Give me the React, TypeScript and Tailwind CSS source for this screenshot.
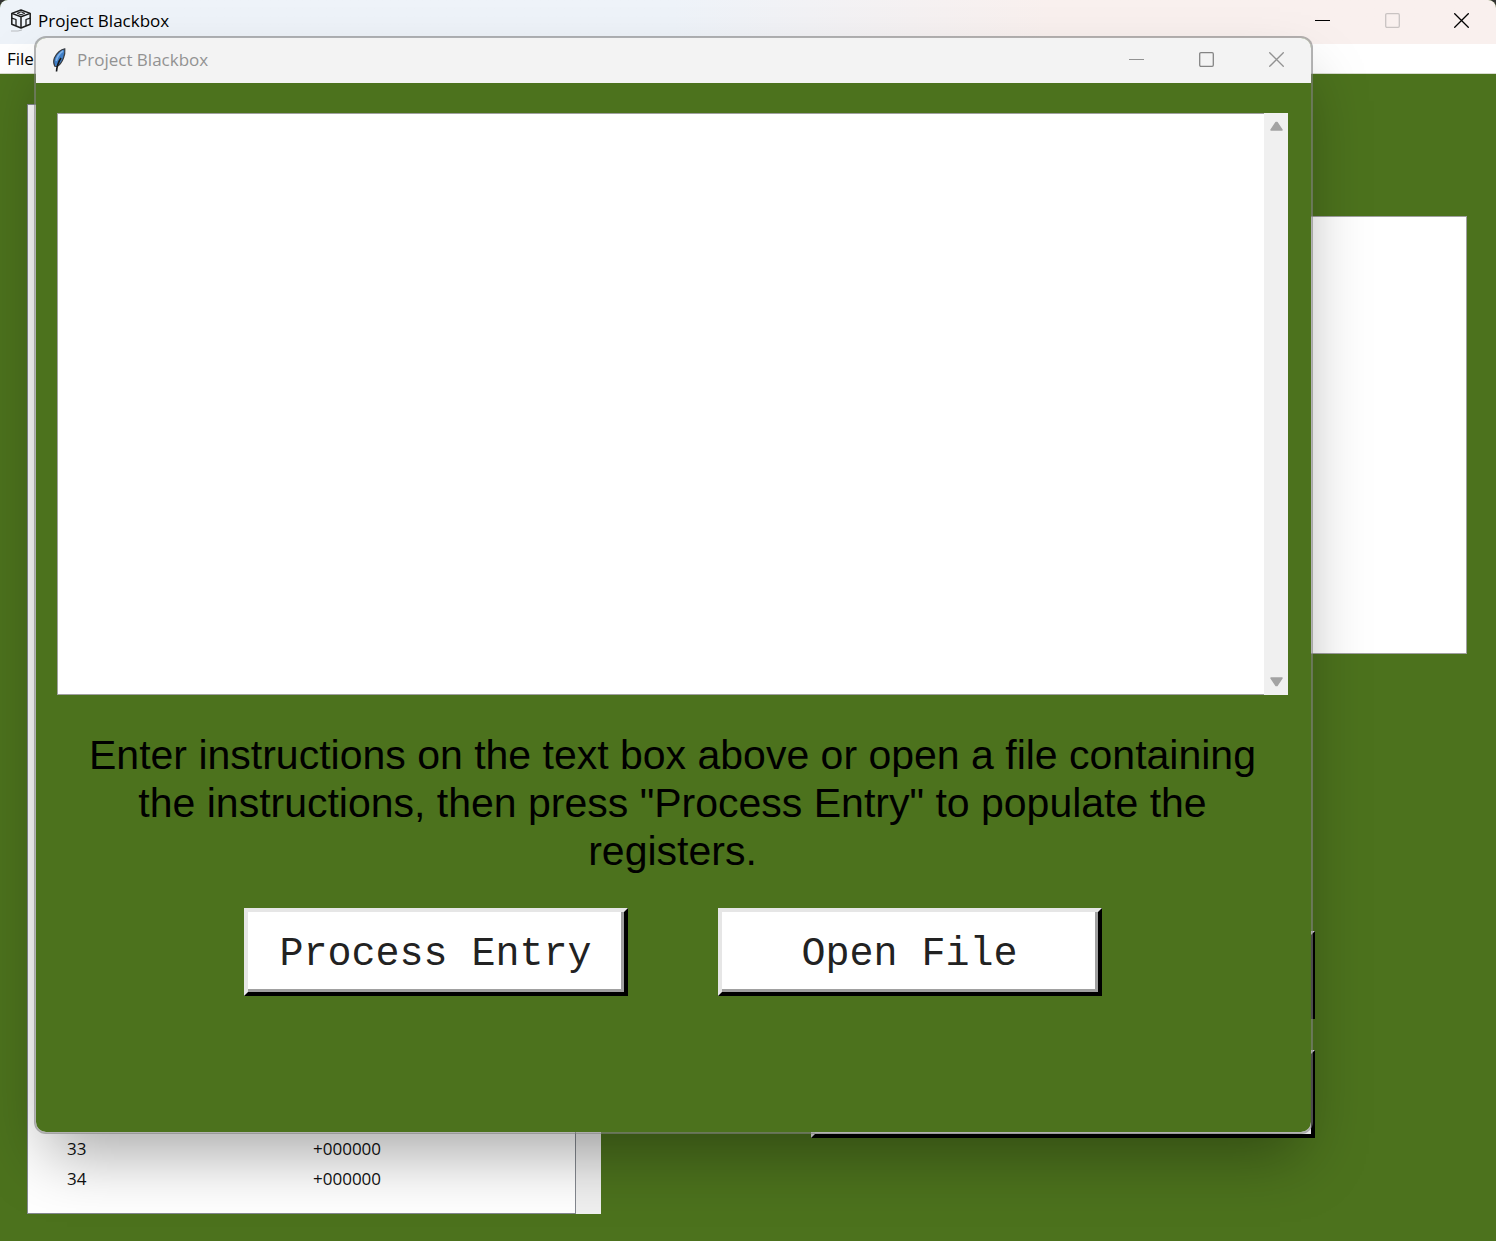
import React from "react";

function MinimizeIcon() {
  return (
    <svg width="15" height="15" viewBox="0 0 15 15" fill="none" stroke="currentColor" shapeRendering="crispEdges">
      <path d="M0 7.5h15" />
    </svg>
  );
}

function MaximizeIcon() {
  return (
    <svg width="15" height="15" viewBox="0 0 15 15" fill="none" stroke="currentColor" strokeWidth="1.3">
      <rect x="0.7" y="0.7" width="13.6" height="13.6" rx="1.2" />
    </svg>
  );
}

function CloseIcon() {
  return (
    <svg width="15" height="15" viewBox="0 0 15 15" fill="none" stroke="currentColor" strokeWidth="1.3">
      <path d="M0.3 0.3l14.4 14.4M14.7 0.3L0.3 14.7" />
    </svg>
  );
}

function BoxIcon() {
  return (
    <svg width="22" height="23" viewBox="0 0 22 23" fill="none" stroke="#1b1b1b" strokeWidth="1.5" strokeLinejoin="round">
      <path d="M11 1l9.200 3.400v10.800L11 19l-9.200-3.800V4.400z" />
      <path d="M1.800 4.400L11 7.800l9.200-3.400M11 7.800V19" />
      <path d="M11 2.800l3.800 1.500L11 5.800 7.200 4.300z" strokeWidth="1" />
      <path d="M1.800 9.200l4.200 1.300v6.300M20.200 9.200L16 10.500v6.300" strokeWidth="1.300" />
      <path d="M1 22h7l4-1" stroke="#b9bcc0" strokeWidth="1" />
    </svg>
  );
}

function FeatherIcon() {
  return (
    <svg width="14" height="24" viewBox="0 0 14 24">
      <path d="M12.800 0.800C9 1.200 4.500 5 2.400 10c-1.200 3-1 5.500.4 8.300l2 .2c3-1.500 5.200-4.500 6.700-8.500 1.200-3 1.600-6.300 1.300-9.200z" fill="#3f7fc8" stroke="#3a3d42" strokeWidth="1.200" />
      <path d="M11 3C8 5 5.200 8.500 4.200 13" fill="none" stroke="#7fb2ea" strokeWidth="1.600" />
      <path d="M9 10C7 13 5 17 4.500 23.500" fill="none" stroke="#16181c" strokeWidth="1.600" />
    </svg>
  );
}

function Arrow({ down = false }: { down?: boolean }) {
  return (
    <svg width="13" height="10" viewBox="0 0 13 10" fill="#a3a3a3" stroke="#a3a3a3" strokeWidth="1.500" strokeLinejoin="round">
      {down ? <path d="M1 1h11L7 8.500H6z" /> : <path d="M1 9h11L7 1.500H6z" />}
    </svg>
  );
}

const title = "font-['Open_Sans',sans-serif] text-[17px] leading-6";

function RaisedButton({ children }: { children: React.ReactNode }) {
  return (
    <button
      type="button"
      className="h-22 w-96 border-4 border-t-[#e6e6e6] border-l-[#e6e6e6] border-r-black border-b-black bg-white pt-[6px] font-['Liberation_Mono',monospace] text-[40px] leading-none text-[#222] shadow-[inset_-3px_-3px_0_#a0a0a0]"
    >
      {children}
    </button>
  );
}

const rows = [
  ["33", "+000000"],
  ["34", "+000000"],
];

function MainWindow() {
  return (
    <div className="flex min-h-screen flex-col overflow-hidden rounded-t-lg bg-[#4c721d]">
      <header className="flex h-11 shrink-0 items-center bg-linear-to-r from-[#eef3f9] from-45% to-[#f9f0ee] to-70% pb-[3px] pl-[10px] text-black">
        <BoxIcon />
        <span className={`${title} ml-[6px] flex-1`}>Project Blackbox</span>
        <div className="flex">
          <button type="button" aria-label="Minimize" className="flex h-8 w-[70px] items-center justify-center">
            <MinimizeIcon />
          </button>
          <button type="button" aria-label="Maximize" disabled className="flex h-8 w-[70px] items-center justify-center text-[#c9c3c2]">
            <MaximizeIcon />
          </button>
          <button type="button" aria-label="Close" className="flex h-8 w-[69px] items-center justify-center">
            <CloseIcon />
          </button>
        </div>
      </header>
      <nav className="flex h-[30px] shrink-0 items-center border-b border-[#d8dccf] bg-white pl-[7px]">
        <button type="button" className="font-['Open_Sans',sans-serif] text-[17px] leading-6 text-black">File</button>
      </nav>
      <main className="flex flex-1 justify-between pt-[30px] pr-[29px] pb-[27px] pl-[27px]">
        <section className="flex w-[574px]">
          <div className="flex flex-1 flex-col justify-end border border-[#84888f] bg-white pb-[19px]">
            <table className="w-full table-fixed text-left font-['Open_Sans',sans-serif] text-[17px] leading-[30px] text-[#111]">
              <tbody>
                {rows.map(([address, value]) => (
                  <tr key={address}>
                    <td className="w-[246px] py-0 pl-[39px]">{address}</td>
                    <td className="py-0 pl-[39px]">{value}</td>
                  </tr>
                ))}
              </tbody>
            </table>
          </div>
          <div className="w-[25px] bg-[#f0f0f0]" />
        </section>
        <section className="flex w-[656px] flex-col pt-[112px]">
          <textarea aria-label="Output" className="block h-[438px] w-full resize-none border border-[#a0a0a0] bg-white outline-none" />
          <div className="mt-[277px] flex flex-col gap-[31px] pr-[152px]">
            <div className="h-22 border-4 border-t-[#e6e6e6] border-l-[#e6e6e6] border-r-black border-b-black bg-white" />
            <div className="h-22 border-4 border-t-[#e6e6e6] border-l-[#e6e6e6] border-r-black border-b-black bg-white" />
          </div>
        </section>
      </main>
    </div>
  );
}

function EntryDialog() {
  return (
    <div
      role="dialog"
      aria-label="Project Blackbox"
      className="absolute top-[36px] right-[183px] bottom-[107px] left-[34px] flex flex-col overflow-hidden rounded-xl border-2 border-[#80808099] bg-[#4c721d] bg-clip-padding shadow-[0_32px_60px_-12px_rgba(0,0,0,0.34)]"
    >
      <header className="flex h-[45px] shrink-0 items-center bg-[#f3f3f3] pb-[2px] pl-4 text-[#929292]">
        <FeatherIcon />
        <span className={`${title} ml-[11px] flex-1`}>Project Blackbox</span>
        <div className="flex">
          <button type="button" aria-label="Minimize" className="flex h-8 w-[70px] items-center justify-center">
            <MinimizeIcon />
          </button>
          <button type="button" aria-label="Maximize" className="flex h-8 w-[70px] items-center justify-center text-[#848484]">
            <MaximizeIcon />
          </button>
          <button type="button" aria-label="Close" className="flex h-8 w-[70px] items-center justify-center">
            <CloseIcon />
          </button>
        </div>
      </header>
      <div className="flex flex-1 flex-col pt-[30px] pr-[23px] pl-[21px]">
        <div className="flex h-[582px]">
          <textarea
            aria-label="Instructions"
            className="block flex-1 resize-none border border-r-0 border-[#a0a0a0] bg-white p-2 font-['Liberation_Mono',monospace] text-xl outline-none"
          />
          <div className="flex w-6 flex-col items-center justify-between bg-[#f0f0f0] py-2">
            <Arrow />
            <Arrow down />
          </div>
        </div>
        <p className="mt-9 px-8 text-center font-['Liberation_Sans',sans-serif] text-[41px] leading-12 text-black">
          Enter instructions on the text box above or open a file containing the instructions, then press "Process Entry" to populate the registers.
        </p>
        <div className="mt-[33px] flex justify-center gap-[90px]">
          <RaisedButton>Process Entry</RaisedButton>
          <RaisedButton>Open File</RaisedButton>
        </div>
      </div>
    </div>
  );
}

export default function App() {
  return (
    <div className="relative min-h-screen bg-[#333]">
      <MainWindow />
      <EntryDialog />
    </div>
  );
}
